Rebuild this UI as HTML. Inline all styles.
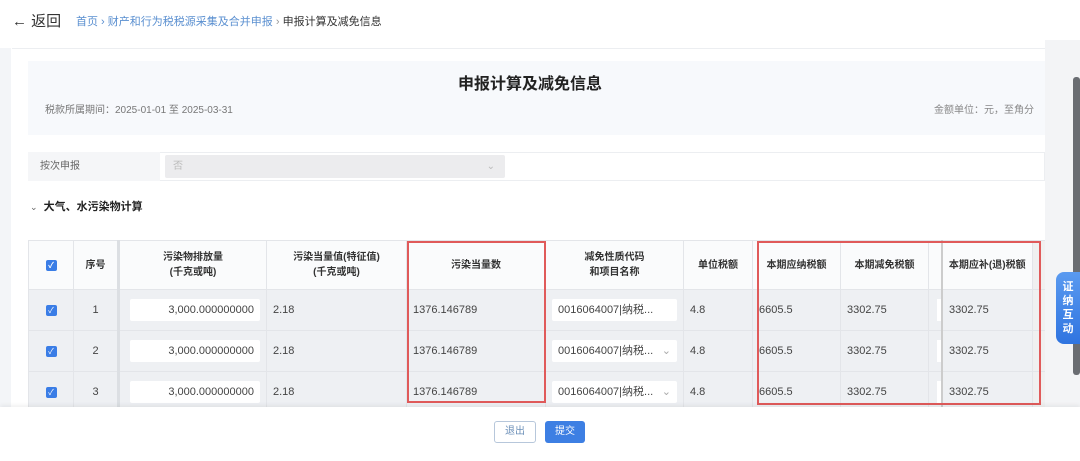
<!DOCTYPE html>
<html><head><meta charset="utf-8"><style>
*{margin:0;padding:0;box-sizing:border-box}
body{width:1080px;height:461px;overflow:hidden;background:#fff;font-family:"Liberation Sans","Noto Sans CJK SC",sans-serif;color:#333;position:relative}
.abs{position:absolute}
.t{font-size:11px}
table{border-collapse:collapse;position:absolute;left:28px;top:240px;table-layout:fixed}
td{border:1px solid #e3e5e9;font-size:11px;height:41px;padding:0 6px;color:#444;background:#eef0f3;white-space:nowrap;overflow:hidden}
tr.h td{background:#fafbfc;height:49px;text-align:center;font-weight:bold;font-size:10px;color:#333;line-height:15px;padding:0 2px}
.cb{display:inline-block;width:11px;height:11px;background:#3a7de6;border-radius:2px;color:#fff;font-size:8px;line-height:11px;text-align:center}
.inp{background:#fff;height:22px;line-height:22px;border-radius:2px;padding:0 6px}
</style></head><body>
<div class="abs" style="left:0;top:48px;width:11px;height:360px;background:#f3f5f8"></div>
<div class="abs" style="left:12px;top:48px;width:1033px;height:1px;background:#eceef1"></div>
<div class="abs" style="left:12px;top:10px;font-size:15px;color:#333">←&nbsp;返回</div>
<div class="abs t" style="left:76px;top:13px;color:#5a8fd0">首页 › 财产和行为税税源采集及合并申报 <span style="color:#999">›</span> <span style="color:#333">申报计算及减免信息</span></div>
<div class="abs" style="left:28px;top:61px;width:1017px;height:74px;background:#f7f9fc"></div>
<div class="abs" style="left:0;width:1060px;top:70px;text-align:center;font-size:16px;font-weight:bold;color:#222">申报计算及减免信息</div>
<div class="abs" style="left:45px;top:101px;font-size:10px;color:#777">税款所属期间：2025-01-01 至 2025-03-31</div>
<div class="abs" style="left:900px;width:134px;text-align:right;top:101px;font-size:10px;color:#888">金额单位：元，至角分</div>
<div class="abs" style="left:28px;top:152px;width:1017px;height:29px;border:1px solid #eceef1"></div>
<div class="abs" style="left:28px;top:152px;width:132px;height:29px;background:#f5f6f8;font-size:10px;line-height:29px;padding-left:12px;color:#666">按次申报</div>
<div class="abs" style="left:165px;top:155px;width:340px;height:23px;background:#ececee;border-radius:2px;font-size:10px;line-height:23px;padding-left:8px;color:#bbb">否<span style="position:absolute;right:10px">⌄</span></div>
<div class="abs" style="left:30px;top:198px;font-size:11px;font-weight:bold;color:#222"><span style="font-weight:normal;color:#666;font-size:9px">⌄</span>&nbsp;&nbsp;大气、水污染物计算</div>
<table>
<colgroup><col style="width:45px"><col style="width:45px"><col style="width:148px"><col style="width:140px"><col style="width:139px"><col style="width:138px"><col style="width:69px"><col style="width:88px"><col style="width:88px"><col style="width:12px"><col style="width:90px"><col style="width:15px"></colgroup>
<tr class="h"><td><span class="cb">✓</span></td><td>序号</td><td style="border-left:3px solid #dcdfe3">污染物排放量<br>(千克或吨)</td><td>污染当量值(特征值)<br>(千克或吨)</td><td>污染当量数</td><td>减免性质代码<br>和项目名称</td><td>单位税额</td><td>本期应纳税额</td><td>本期减免税额</td><td></td><td style="border-left:2px solid #ccc">本期应补(退)税额</td><td style="background:#f0f0f0"></td></tr>
<tr><td style="text-align:center"><span class="cb">✓</span></td><td style="text-align:center">1</td><td style="border-left:3px solid #dcdfe3;padding-left:10px"><div class="inp" style="text-align:right">3,000.000000000</div></td><td>2.18</td><td>1376.146789</td><td><div class="inp">0016064007|纳税...</div></td><td>4.8</td><td>6605.5</td><td>3302.75</td><td style="padding:0"><div style="background:#fff;width:4px;height:22px;margin-left:8px"></div></td><td style="border-left:2px solid #ccc">3302.75</td><td style="background:#f0f0f0"></td></tr>
<tr><td style="text-align:center"><span class="cb">✓</span></td><td style="text-align:center">2</td><td style="border-left:3px solid #dcdfe3;padding-left:10px"><div class="inp" style="text-align:right">3,000.000000000</div></td><td>2.18</td><td>1376.146789</td><td><div class="inp">0016064007|纳税...<span style="float:right;color:#aaa">⌄</span></div></td><td>4.8</td><td>6605.5</td><td>3302.75</td><td style="padding:0"><div style="background:#fff;width:4px;height:22px;margin-left:8px"></div></td><td style="border-left:2px solid #ccc">3302.75</td><td style="background:#f0f0f0"></td></tr>
<tr><td style="text-align:center"><span class="cb">✓</span></td><td style="text-align:center">3</td><td style="border-left:3px solid #dcdfe3;padding-left:10px"><div class="inp" style="text-align:right">3,000.000000000</div></td><td>2.18</td><td>1376.146789</td><td><div class="inp">0016064007|纳税...<span style="float:right;color:#aaa">⌄</span></div></td><td>4.8</td><td>6605.5</td><td>3302.75</td><td style="padding:0"><div style="background:#fff;width:4px;height:22px;margin-left:8px"></div></td><td style="border-left:2px solid #ccc">3302.75</td><td style="background:#f0f0f0"></td></tr>
</table>
<div class="abs" style="left:407px;top:241px;width:139px;height:162px;border:2px solid #e05a5a"></div>
<div class="abs" style="left:757px;top:241px;width:284px;height:164px;border:2px solid #e05a5a"></div>
<div class="abs" style="left:1045px;top:40px;width:35px;height:370px;background:#f3f4f6"></div>
<div class="abs" style="left:1073px;top:77px;width:7px;height:298px;background:#6a6d72;border-radius:3px"></div>
<div class="abs" style="left:1056px;top:272px;width:24px;height:72px;background:linear-gradient(#5a9af0,#2f74e0);border-radius:8px 0 0 8px;color:#fff;font-size:11px;line-height:14px;text-align:center;padding-top:8px;font-weight:bold">证<br>纳<br>互<br>动</div>
<div class="abs" style="left:0;top:407px;width:1080px;height:54px;background:#fff;box-shadow:0 -2px 4px rgba(0,0,0,.06)"></div>
<div class="abs" style="left:494px;top:421px;width:42px;height:22px;border:1px solid #b7c7db;border-radius:3px;font-size:10px;text-align:center;line-height:20px;color:#6b8fb8">退出</div>
<div class="abs" style="left:545px;top:421px;width:40px;height:22px;background:#3d7fe3;border-radius:3px;font-size:10px;text-align:center;line-height:22px;color:#fff">提交</div>
</body></html>
